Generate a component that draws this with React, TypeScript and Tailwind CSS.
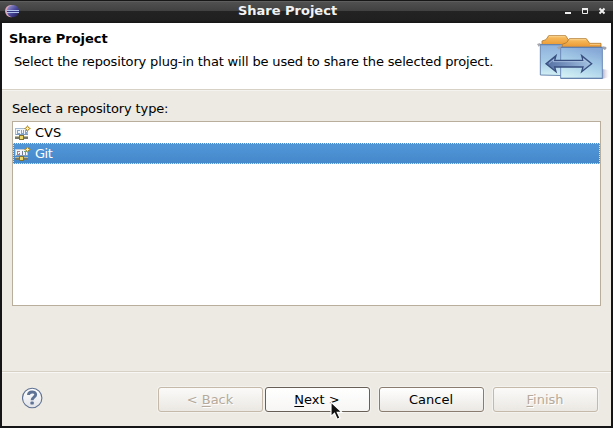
import type { ReactNode } from 'react';

function EclipseIcon() {
  return (
    <svg width="15" height="13" viewBox="0 0 15 13" className="block">
      <defs>
        <linearGradient id="ecl" x1="0" y1="0" x2="1" y2="1">
          <stop offset="0" stopColor="#a9a3d8" />
          <stop offset=".5" stopColor="#4c4a9c" />
          <stop offset="1" stopColor="#17164f" />
        </linearGradient>
      </defs>
      <ellipse cx="6" cy="6.1" rx="6" ry="6.1" fill="#dca6b8" />
      <ellipse cx="8" cy="6.1" rx="6.2" ry="6.1" fill="url(#ecl)" />
      <path d="M1.5 5.5H14M1.5 7.5H14" stroke="#b3c4ec" />
      <path d="M2 6.5H14" stroke="#2f3380" />
    </svg>
  );
}

function ShareBanner() {
  return (
    <svg width="75" height="66" viewBox="18 69 225 198" className="block">
      <defs>
        <linearGradient id="fold" x1="0" y1="0" x2="0" y2="1">
          <stop offset="0" stopColor="#8fb2dc" />
          <stop offset=".5" stopColor="#a3c9e6" />
          <stop offset="1" stopColor="#d3f0f5" />
        </linearGradient>
        <linearGradient id="foldf" x1=".2" y1="1" x2=".6" y2="0">
          <stop offset="0" stopColor="#d4f1f4" />
          <stop offset=".5" stopColor="#a8cfe9" />
          <stop offset="1" stopColor="#86a9d7" />
        </linearGradient>
        <linearGradient id="tab" x1="0" y1="0" x2="0" y2="1">
          <stop offset="0" stopColor="#f9c266" />
          <stop offset="1" stopColor="#eb962f" />
        </linearGradient>
        <linearGradient id="arr" x1="0" y1="0" x2="1" y2="0">
          <stop offset="0" stopColor="#5470a2" />
          <stop offset=".5" stopColor="#7b97c2" />
          <stop offset="1" stopColor="#a3c3e2" />
        </linearGradient>
        <linearGradient id="shade" x1="0" y1="0" x2="1" y2="0">
          <stop offset="0" stopColor="#aaa2be" />
          <stop offset="1" stopColor="#ffffff" stopOpacity="0" />
        </linearGradient>
      </defs>
      <path d="M216 207L241 211V230L216 237Z" fill="url(#shade)" />
      <path d="M36 132V123L48 119L56 107H107L115 119V137H36Z" fill="url(#tab)" stroke="#b07a30" strokeWidth="2.5" />
      <path d="M57 110H106" stroke="#ffe1a2" strokeWidth="2" />
      <path d="M31 134H110V227L31 225Z" fill="url(#fold)" stroke="#6c8ab2" strokeWidth="3" />
      <path d="M21 132L31 129V136L26 140Z" fill="#a7a7ad" />
      <path d="M30 134H92" stroke="#6483ad" strokeWidth="3" />
      <path d="M97 142V133L110 128L118 116H169L179 130H213V142Z" fill="url(#tab)" stroke="#b07a30" strokeWidth="2.5" />
      <path d="M119 119H168M180 133H211" stroke="#ffe1a2" strokeWidth="2" />
      <path d="M92 142H217V235H92Z" fill="url(#foldf)" stroke="#6c8ab8" strokeWidth="3" />
      <path d="M91 142H218" stroke="#5e7eae" strokeWidth="3" />
      <path d="M92 235H217" stroke="#5f7fa9" strokeWidth="3" />
      <path d="M80 142L92 137V144L87 149ZM218 139L229 141L229 147L224 150L218 146Z" fill="#a2a3ab" />
      <path d="M48 191L78 167L74 181H159L155 167L185 191L155 215L159 201H74L78 215Z" fill="url(#arr)" stroke="#384f7f" strokeWidth="4" strokeLinejoin="miter" />
      <path d="M57 190L72 178L69 185H163L160 177L176 190" fill="none" stroke="#b5cae5" strokeWidth="2" />
    </svg>
  );
}

function RepoIcon({ kind }: { kind: 'cvs' | 'git' }) {
  const git = kind === 'git';
  return (
    <svg width="16" height="16" viewBox="0 0 16 16" className="block shrink-0" shapeRendering="crispEdges">
      <rect x=".5" y="3.5" width="12" height="6" fill="#f1f6fb" stroke={git ? '#c3c9d2' : '#a3bbd3'} />
      <path d="M1 9.5H13" stroke="#7d9cbc" />
      {git ? (
        <>
          <path d="M5 5.5H2.5V8.5H4.5V7" fill="none" stroke="#b07c88" />
          <path d="M7.5 5V9" stroke="#777c96" />
          <path d="M9 5.5H12M10.5 5V9" stroke="#68a880" />
        </>
      ) : (
        <path d="M5 5.5H2.5V8.5H5M6.5 5V8L7.5 9L8.5 8V5M12 5.5H10.5V7H11.5V8.5H9.5" fill="none" stroke="#82a3ca" />
      )}
      <path d="M0 13H13" stroke="#777767" strokeWidth="2" />
      <path d="M0 11.5H13" stroke="#bdb996" />
      <rect x="4.5" y="10.5" width="4" height="4" fill="#ecd867" stroke="#80712b" />
      <g shapeRendering="auto">
        <path d="M12.5 0L13.8 2.2L16 3.5L13.8 4.8L12.5 7L11.2 4.8L9 3.5L11.2 2.2Z" fill="#b58a20" />
        <path d="M12.5 1.8V5.2M10.8 3.5H14.2" stroke="#fff2b0" />
      </g>
    </svg>
  );
}

function HelpIcon() {
  return (
    <svg width="22" height="22" viewBox="0 0 22 22" className="block">
      <defs>
        <linearGradient id="help" x1="0" y1="0" x2="0" y2="1">
          <stop offset="0" stopColor="#ffffff" />
          <stop offset="1" stopColor="#e0e3e8" />
        </linearGradient>
      </defs>
      <circle cx="10.2" cy="11" r="9.7" fill="url(#help)" stroke="#5e7192" strokeWidth="1.1" />
      <path d="M6.5 8C6.5 4 13.7 4 13.7 7.6C13.7 10.2 10.1 10 10.1 13.2" fill="none" stroke="#5f7397" strokeWidth="2.9" />
      <rect x="8.4" y="14.4" width="3.4" height="3.2" rx="1.2" fill="#5f7397" />
    </svg>
  );
}

function Cursor() {
  return (
    <svg width="14" height="20" viewBox="0 0 14 20" className="absolute left-[330px] top-[401px]">
      <path d="M1 1V15.5L4.5 12.3L7.2 18.3L10 17L7.3 11.4H12Z" fill="#111" stroke="#fff" strokeWidth="1.2" />
    </svg>
  );
}

function Button({ children, kind }: { children: ReactNode; kind: 'off' | 'on' | 'default' }) {
  const look = {
    off: 'border-[#c5b9a9] text-[#b5aa9b] [text-shadow:1px_1px_0_#fff] from-[#fbfaf9] to-[#ebe8e3]',
    on: 'border-[#8a7d6f] text-black from-[#ffffff] to-[#ebe8e4]',
    default: 'border-[#686056] text-black from-[#ffffff] to-[#f7f6f4]',
  }[kind];
  return (
    <button className={`block h-[25px] w-[105px] rounded-[3px] border bg-linear-to-b pr-px text-center leading-[23px] shadow-[0_0_0_1px_#f4f2ee] ${look}`}>
      {children}
    </button>
  );
}

function Key({ children }: { children: string }) {
  return <span className="underline decoration-1 underline-offset-2">{children}</span>;
}

export default function App() {
  return (
    <div className="relative flex h-[428px] w-[613px] flex-col overflow-hidden bg-[#151416] font-['DejaVu_Sans',sans-serif] text-[13px] text-black">
      <header className="flex h-[23px] shrink-0 items-start border-t border-[#171717] bg-[linear-gradient(to_bottom,#6b6b6b_0px,#505050_1px,#414141_10px,#232323_10px,#202020_19px,#151515_22px)] px-[5px]">
        <div className="w-[60px] pt-1"><EclipseIcon /></div>
        <div className="flex-1 pr-[38px] text-center text-[13px] font-bold leading-[19px] text-[#f2f2f2]">Share Project</div>
        <svg width="60" height="22" viewBox="0 0 60 22" className="block">
          <path d="M17 12H23" stroke="#eee" strokeWidth="2" />
          <path d="M34.5 8V12.5H39.5V8" fill="none" stroke="#eee" />
          <path d="M34 8H40" stroke="#eee" strokeWidth="2" />
          <path d="M51.5 7.5L56.5 12.5M56.5 7.5L51.5 12.5" stroke="#eee" strokeWidth="2" />
        </svg>
      </header>
      <main className="mx-[2px] mb-[2px] flex min-h-0 flex-1 flex-col bg-[#edeae3]">
        <section className="flex h-[66px] shrink-0 justify-between bg-white">
          <div className="whitespace-nowrap">
            <h1 className="pl-[7px] pt-2 font-bold leading-4 tracking-[-0.05px]">Share Project</h1>
            <p className="pl-3 pt-[7px] leading-4 tracking-[-0.158px]">Select the repository plug-in that will be used to share the selected project.</p>
          </div>
          <ShareBanner />
        </section>
        <div className="h-[2px] shrink-0 border-t border-[#d6d0c5] bg-[#f5f3f0]" />
        <section className="px-[10px] pt-[9px]">
          <div className="h-[21px] leading-[18px] tracking-[-0.13px]">Select a repository type:</div>
          <div className="h-[185px] w-[589px] border border-[#b9ad9c] bg-white">
            <div className="flex h-[21px] items-center pl-[2px]"><RepoIcon kind="cvs" /><span className="pl-1">CVS</span></div>
            <div className="flex h-[21px] items-center border border-dotted border-[#d5e4f3] bg-linear-to-b from-[#5197d8] to-[#4588cb] pl-px text-white"><RepoIcon kind="git" /><span className="pl-1 tracking-[-0.5px]">Git</span></div>
          </div>
        </section>
        <div className="mt-[65px] h-[2px] shrink-0 border-t border-[#d6d0c5] bg-[#f8f7f5]" />
        <footer className="flex items-start pl-5 pr-[13px] pt-[14px]">
          <div className="w-[136px]"><HelpIcon /></div>
          <div className="flex">
            <Button kind="off">&lt; <Key>B</Key>ack</Button>
            <div className="ml-[2px]"><Button kind="default"><Key>N</Key>ext &gt;</Button></div>
            <div className="ml-[9px]"><Button kind="on">Cancel</Button></div>
            <div className="ml-[9px]"><Button kind="off"><Key>F</Key>inish</Button></div>
          </div>
        </footer>
      </main>
      <Cursor />
    </div>
  );
}
